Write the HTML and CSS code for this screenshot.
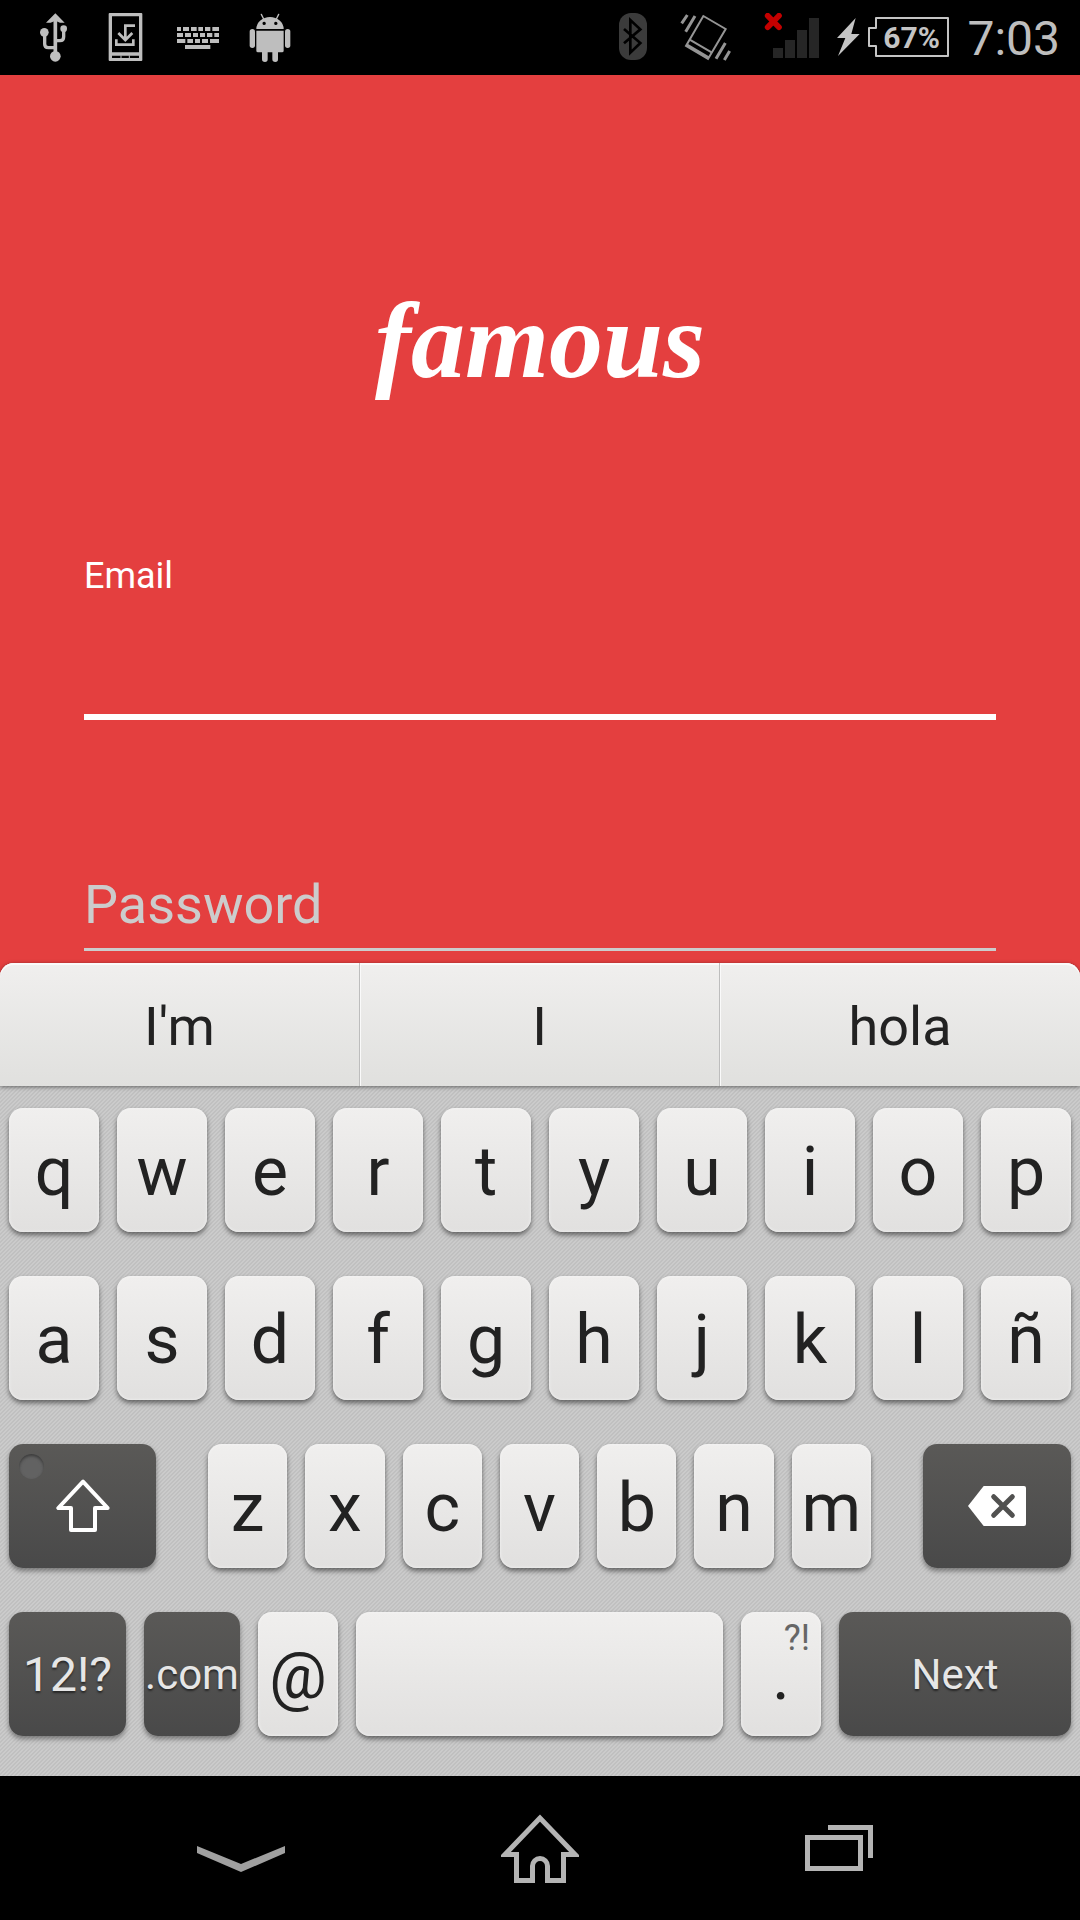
FILE: index.html
```html
<!DOCTYPE html>
<html lang="en">
<head>
<meta charset="utf-8">
<meta name="viewport" content="width=device-width, initial-scale=1">
<title>famous</title>
<link rel="stylesheet" href="styles.css">
</head>
<body>
<header class="status">
  <div class="status-left">
    <svg class="icon-box" viewBox="90 39 144 147" aria-label="USB">
      <g fill="none" stroke="#bebebe" stroke-width="10"><path d="M166 60V160" stroke-width="11"/><path d="M134 98V132Q134 143 145 143H166"/><path d="M191 88V110Q191 122 180 122H166"/></g>
      <g fill="#bebebe"><path d="M166 40L194 68H180L166 62L152 68H138Z"/><circle cx="133" cy="97" r="13"/><circle cx="191" cy="86" r="10"/><circle cx="166" cy="169" r="16"/></g>
    </svg>
    <svg class="icon-box" viewBox="306 39 144 147" aria-label="Update">
      <path fill="#bebebe" fill-rule="evenodd" d="M329 39H424Q427 39 427 42V180Q427 183 424 183H329Q326 183 326 180V42Q326 39 329 39ZM336 49V157H417V49ZM336 167V174H417V167Z"/>
      <path fill="none" stroke="#bebebe" stroke-width="8" d="M405 77H376V116M355 99L376 120L397 99M349 118V134H400V118"/>
      <path stroke="#bebebe" stroke-width="3" d="M363 166V175M388 166V175"/>
    </svg>
    <svg class="icon-box" viewBox="522 39 144 147" aria-label="Keyboard">
      <g fill="none" stroke="#bebebe" stroke-width="12"><path d="M531 87H543M549 87H567M573 87H590M595 87H609M615 87H631M637 87H657"/><path d="M531 105H549M555 105H573M579 105H594M600 105H615M621 105H637M643 105H657"/><path d="M531 123H556M562 123H579M585 123H600M606 123H624M630 123H657"/><path d="M555 141H631"/></g>
    </svg>
    <svg class="icon-box" viewBox="738 39 144 147" aria-label="Android">
      <g fill="#bebebe"><path fill-rule="evenodd" d="M769 87A41 36 0 0 1 851 87ZM792 65a5 5 0 1 0 1 10a5 5 0 1 0 -1 -10ZM827 65a5 5 0 1 0 1 10a5 5 0 1 0 -1 -10Z"/><path d="M769 92H851V152Q851 157 846 157H834V178Q834 186 826 186Q817 186 817 178V157H803V178Q803 186 795 186Q786 186 786 178V157H774Q769 157 769 152Z"/><rect x="749" y="87" width="16" height="57" rx="8"/><rect x="855" y="87" width="16" height="57" rx="8"/></g>
      <path stroke="#bebebe" stroke-width="4" stroke-linecap="round" d="M784 43L791 57M836 43L829 57"/>
    </svg>
  </div>
  <div class="status-right">
    <div class="signals">
      <svg class="icon-bt" viewBox="87 39 84 147" aria-label="Bluetooth"><rect x="87" y="39" width="84" height="141" rx="36" fill="#3b3b3b"/><path fill="none" stroke="#000" stroke-width="8" d="M102 87L151 129L121 158V60L151 88L102 130"/></svg>
      <svg class="icon-vib" viewBox="267 39 156 147" aria-label="Vibrate">
        <g fill="none" stroke="#959595"><path stroke-width="6" d="M340 48L407 87L354 177L288 138Z"/><path stroke-width="6" d="M299 119L366 158"/><path stroke-width="8" d="M291 135L356 173"/><path stroke-width="9" d="M292 45L275 70M315 48L287 95M406 129L378 176M419 153L403 180"/></g>
      </svg>
      <svg class="icon-sig" viewBox="519 39 168 147" aria-label="No signal"><path fill="#262626" d="M549 144h30v30h-30zM585 120h30v54h-30zM621 90h30v84h-30zM657 54h30v120h-30z"/><path stroke="#c40000" stroke-width="17" stroke-linecap="round" d="M533 47L567 82M567 47L533 82"/></svg>
    </div>
    <div class="power">
      <svg class="icon-bolt" viewBox="741 39 69 147" aria-label="Charging"><path fill="#c4c4c4" d="M797 54L741 114H766L744 168L809 102H784Z"/></svg>
      <svg class="icon-bat" viewBox="834 39 243 147"><path fill="none" stroke="#c4c4c4" stroke-width="6" stroke-linejoin="round" d="M858 54H1074V168H858V138H837V84H858Z"/><text x="880" y="143" class="bat-text">67%</text></svg>
    </div>
    <time class="clock">7:03</time>
  </div>
</header>

<main class="login">
  <h1 class="logo">famous</h1>
  <form class="fields">
    <label class="email-label" for="email">Email</label>
    <input class="email" id="email" type="text" autocomplete="off">
    <input class="password" type="password" placeholder="Password" aria-label="Password">
  </form>
</main>

<section class="keyboard" aria-label="Keyboard">
  <div class="suggestions">
    <button type="button">I'm</button><button type="button">I</button><button type="button">hola</button>
  </div>
  <div class="keys">
    <div class="row"><button class="key">q</button><button class="key">w</button><button class="key">e</button><button class="key">r</button><button class="key">t</button><button class="key">y</button><button class="key">u</button><button class="key">i</button><button class="key">o</button><button class="key">p</button></div>
    <div class="row"><button class="key">a</button><button class="key">s</button><button class="key">d</button><button class="key">f</button><button class="key">g</button><button class="key">h</button><button class="key">j</button><button class="key">k</button><button class="key">l</button><button class="key">ñ</button></div>
    <div class="row-shift">
      <button class="key dark" aria-label="Shift"><span class="led"></span><svg class="shift-icon" viewBox="168 177 162 162"><path fill="none" stroke="#fff" stroke-width="12" stroke-linejoin="round" d="M249 185L175 264H213V330H285V264H323Z"/></svg></button>
      <div class="row"><button class="key">z</button><button class="key">x</button><button class="key">c</button><button class="key">v</button><button class="key">b</button><button class="key">n</button><button class="key">m</button></div>
      <button class="key dark" aria-label="Backspace"><svg class="back-icon" viewBox="924 198 174 120"><path fill="#fff" d="M971 198H1092Q1098 198 1098 204V312Q1098 318 1092 318H971L924 258Z"/><path stroke="#515150" stroke-width="15" stroke-linecap="round" d="M1001 230L1057 286M1057 230L1001 286"/></svg></button>
    </div>
    <div class="row-bottom">
      <button class="key dark symbols">12!?</button>
      <button class="key dark">.com</button>
      <button class="key at">@</button>
      <button class="key" aria-label="Space"></button>
      <button class="key"><span class="hint">?!</span>.</button>
      <button class="key dark">Next</button>
    </div>
  </div>
</section>

<nav class="navbar">
  <button aria-label="Hide keyboard"><svg width="88" height="72" viewBox="0 0 88 72"><path fill="#a0a0a0" d="M0 34L44 52L88 34V41L44 60L0 41Z"/></svg></button>
  <button aria-label="Home"><svg width="78" height="72" viewBox="0 0 78 72"><path fill="none" stroke="#b4b4b4" stroke-width="5" d="M39 6L4 42.500H15.500V68.500H31.500V54a7.500 7.500 0 0 1 15 0V68.500H62.500V42.500H74Z"/></svg></button>
  <button aria-label="Recent apps"><svg width="68" height="72" viewBox="0 0 68 72"><path fill="none" stroke="#b4b4b4" stroke-width="5" d="M2.500 25.500H55.500V56.500H2.500ZM23 15.500H65.500V46"/></svg></button>
</nav>
</body>
</html>
```

FILE: styles.css
```css
* { box-sizing: border-box; }

body {
  margin: 0;
  min-height: 100vh;
  display: flex;
  flex-direction: column;
  background: #e43f3f;
  font-family: Roboto, "Noto Sans", sans-serif;
}

button {
  margin: 0;
  padding: 0;
  border: 0;
  background: none;
  font: inherit;
  color: inherit;
}

svg { display: block; }

/* Status bar */
.status {
  height: 75px;
  padding: 0 20px 0 30px;
  display: flex;
  justify-content: space-between;
  align-items: center;
  background: #000;
}
.status svg { height: 49px; }
.status-left { display: flex; gap: 24px; }
.status-right { display: flex; align-items: center; gap: 18px; }
.signals { display: flex; gap: 32px; }
.power { display: flex; gap: 8px; }
.icon-box { width: 48px; }
.icon-bt { width: 28px; }
.icon-vib { width: 52px; }
.icon-sig { width: 56px; }
.icon-bolt { width: 23px; }
.icon-bat { width: 81px; }
.bat-text { font-size: 90px; font-weight: 700; fill: #c4c4c4; }
.clock {
  padding-top: 3px;
  font-size: 48px;
  line-height: 56px;
  color: #bebebe;
}

/* Login form */
.login {
  flex: 1;
  padding: 187px 84px 12px;
}
.logo {
  margin: 0 0 136px;
  font-family: "Liberation Serif", serif;
  font-style: italic;
  font-weight: 700;
  font-size: 108px;
  line-height: 157px;
  text-align: center;
  color: #fff;
}
.fields { display: flex; flex-direction: column; }
.fields input {
  width: 100%;
  border: 0;
  border-radius: 0;
  outline: 0;
  background: none;
  color: #fff;
  font: 54px/64px Roboto, "Noto Sans", sans-serif;
}
.email-label { font-size: 36px; line-height: 42px; color: #fff; }
.fields .email {
  height: 123px;
  padding: 0;
  border-bottom: 6px solid #fff;
}
.fields .password {
  height: 79px;
  margin-top: 152px;
  padding: 0 0 12px;
  border-bottom: 3px solid #ccc;
}
.password::placeholder { color: #ccc; opacity: 1; }

/* Keyboard */
.keyboard {
  color: #222;
  border-radius: 14px 14px 0 0;
  background-image: linear-gradient(135deg, #cbcbcb 25%, #c0c0c0 25% 50%, #cbcbcb 50% 75%, #c0c0c0 75%);
  background-size: 4px 4px;
}
.suggestions {
  height: 123px;
  display: grid;
  grid-template-columns: repeat(3, 1fr);
  border-radius: 14px 14px 0 0;
  background: linear-gradient(#f0efee, #e0e0de);
  box-shadow: inset 0 2px 0 #fafafa, 0 1px 4px rgba(0, 0, 0, 0.5);
}
.suggestions button { padding-top: 4px; font-size: 54px; }
.suggestions button:not(:last-child) { border-right: 1px solid #bdbdbd; }
.suggestions button + button { box-shadow: inset 1px 0 0 #fafafa; }
.keys {
  padding: 22px 9px 40px;
  display: grid;
  gap: 44px;
}
.row {
  display: grid;
  grid-auto-flow: column;
  grid-auto-columns: minmax(0, 1fr);
  gap: 18px;
}
.row-shift {
  display: grid;
  grid-template-columns: minmax(0, 147fr) minmax(0, 663fr) minmax(0, 148fr);
  gap: 52px;
}
.row-bottom {
  display: grid;
  grid-template-columns: minmax(0, 117fr) minmax(0, 96fr) minmax(0, 80fr) minmax(0, 367fr) minmax(0, 80fr) minmax(0, 232fr);
  gap: 18px;
}
.key {
  position: relative;
  height: 124px;
  padding-top: 4px;
  display: flex;
  justify-content: center;
  align-items: center;
  border-radius: 14px;
  font-size: 68px;
  background: linear-gradient(#f0efee, #e1e0df);
  box-shadow: inset 0 0 3px #f6f6f6, 0 3px 5px rgba(0, 0, 0, 0.5);
}
.dark {
  padding-top: 0;
  font-size: 42px;
  color: #e6e6e6;
  text-shadow: 0 2px 2px rgba(0, 0, 0, 0.5);
  background: linear-gradient(#5a5957, #494949);
  box-shadow: 0 3px 5px rgba(0, 0, 0, 0.4);
}
.symbols { font-size: 48px; }
.at { font-size: 64px; }
.hint {
  position: absolute;
  top: 5px;
  right: 11px;
  font-size: 36px;
  line-height: 42px;
  color: #666;
}
.led {
  position: absolute;
  top: 10px;
  left: 10px;
  width: 25px;
  height: 25px;
  border-radius: 50%;
  background: #626262;
  box-shadow: inset 0 2px 3px #3c3c3c;
}
.shift-icon { width: 54px; height: 54px; }
.back-icon { width: 58px; height: 40px; }

/* System navigation */
.navbar {
  height: 144px;
  padding: 0 92px;
  display: grid;
  grid-template-columns: repeat(3, 1fr);
  background: #000;
}
.navbar button {
  display: flex;
  justify-content: center;
  align-items: center;
}
```
